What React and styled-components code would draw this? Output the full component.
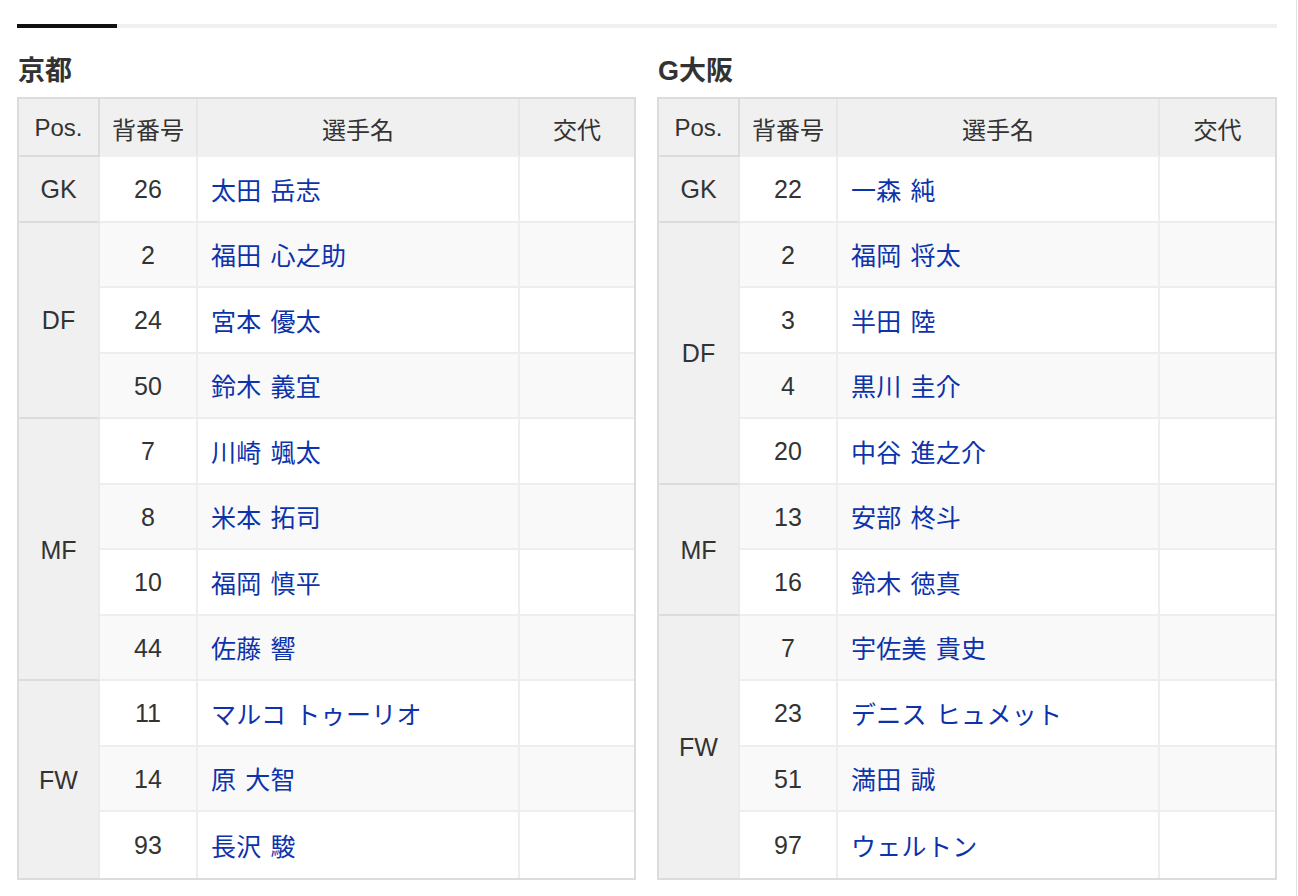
import React from 'react'
import styled, {createGlobalStyle} from 'styled-components'

const GlobalStyle = createGlobalStyle`
  html, body {
    margin: 0;
    padding: 0;
    background: #fff;
  }
  body {
    font-family: "Liberation Sans", "Noto Sans CJK JP", sans-serif;
    color: #333;
  }
`

const kyoto = [
  {pos: 'GK', players: [['26', '太田 岳志']]},
  {pos: 'DF', players: [['2', '福田 心之助'], ['24', '宮本 優太'], ['50', '鈴木 義宜']]},
  {pos: 'MF', players: [['7', '川崎 颯太'], ['8', '米本 拓司'], ['10', '福岡 慎平'], ['44', '佐藤 響']]},
  {pos: 'FW', players: [['11', 'マルコ トゥーリオ'], ['14', '原 大智'], ['93', '長沢 駿']]}
]

const gamba = [
  {pos: 'GK', players: [['22', '一森 純']]},
  {pos: 'DF', players: [['2', '福岡 将太'], ['3', '半田 陸'], ['4', '黒川 圭介'], ['20', '中谷 進之介']]},
  {pos: 'MF', players: [['13', '安部 柊斗'], ['16', '鈴木 徳真']]},
  {pos: 'FW', players: [['7', '宇佐美 貴史'], ['23', 'デニス ヒュメット'], ['51', '満田 誠'], ['97', 'ウェルトン']]}
]

const Lineup = ({title, groups}) => {
  let index = 0
  return (
    <Team>
      <Title>{title}</Title>
      <Table>
        <thead>
          <tr>
            <HeadCell pos>Pos.</HeadCell>
            <HeadCell width={98}>背番号</HeadCell>
            <HeadCell width={322}>選手名</HeadCell>
            <HeadCell last>交代</HeadCell>
          </tr>
        </thead>
        <tbody>
          {groups.map((group, g) =>
            group.players.map(([num, name], i) => {
              index += 1
              const lastRow = g === groups.length - 1 && i === group.players.length - 1
              return (
                <Row key={num} striped={index % 2 === 0}>
                  {i === 0 && (
                    <PosCell rowSpan={group.players.length} last={g === groups.length - 1}>
                      {group.pos}
                    </PosCell>
                  )}
                  <NumCell lastRow={lastRow}>{num}</NumCell>
                  <NameCell lastRow={lastRow}><PlayerLink href="#">{name}</PlayerLink></NameCell>
                  <SubCell lastRow={lastRow} />
                </Row>
              )
            })
          )}
        </tbody>
      </Table>
    </Team>
  )
}

export default function App() {
  return (
    <Page>
      <GlobalStyle />
      <TabBar>
        <ActiveTab />
      </TabBar>
      <Columns>
        <Lineup title="京都" groups={kyoto} />
        <Lineup title="G大阪" groups={gamba} />
      </Columns>
    </Page>
  )
}

const Page = styled.div`
  box-sizing: border-box;
  width: 1297px;
  min-height: 100vh;
  padding: 24px 20px 0 17px;
  border-right: 1px solid #e3e3e3;
`
const TabBar = styled.div`
  display: flex;
  width: 1260px;
  height: 4px;
  background: #f0f0f0;
`
const ActiveTab = styled.div`
  width: 100px;
  background: #111;
`
const Columns = styled.div`
  display: grid;
  grid-template-columns: 619px 620px;
  column-gap: 21px;
  margin-top: 24px;
`
const Team = styled.section``
const Title = styled.h2`
  margin: 0 0 7px 1px;
  font-size: 27px;
  line-height: 38px;
  font-weight: bold;
  color: #333;
`
const Table = styled.table`
  width: 100%;
  table-layout: fixed;
  border-collapse: separate;
  border-spacing: 0;
  border: 2px solid #dcdcdc;
  font-size: 25px;
`
const HeadCell = styled.th`
  box-sizing: border-box;
  width: ${p => (p.pos ? '81px' : p.width ? `${p.width}px` : 'auto')};
  height: 58px;
  padding: 2px 0 0;
  font-size: 24px;
  font-weight: normal;
  background: #f0f0f0;
  color: #333;
  text-align: center;
  border-right: ${p => (p.last ? 'none' : `2px solid ${p.pos ? '#dcdcdc' : '#e6e6e6'}`)};
  border-bottom: ${p => (p.pos ? '2px solid #dcdcdc' : '2px solid #f0f0f0')};
`
const Row = styled.tr`
  background: ${p => (p.striped ? '#f9f9f9' : '#fff')};
`
const PosCell = styled.td`
  box-sizing: border-box;
  padding: 2px 0 0;
  text-align: center;
  background: #f0f0f0;
  border-right: 2px solid #ebebeb;
  border-bottom: ${p => (p.last ? 'none' : '2px solid #dcdcdc')};
`
const NumCell = styled.td`
  box-sizing: border-box;
  height: 65.5px;
  padding: 2px 0 0;
  text-align: center;
  border-right: 2px solid #eee;
  border-bottom: ${p => (p.lastRow ? 'none' : '2px solid #eee')};
`
const NameCell = styled(NumCell)`
  text-align: left;
  padding: 0 0 0 13px;
`
const SubCell = styled(NumCell)`
  border-right: none;
`
const PlayerLink = styled.a`
  color: #0d33ab;
  text-decoration: none;
  font-family: "Noto Sans CJK JP", sans-serif;
  font-weight: 400;
  letter-spacing: 0.3px;
  word-spacing: 3px;
`
